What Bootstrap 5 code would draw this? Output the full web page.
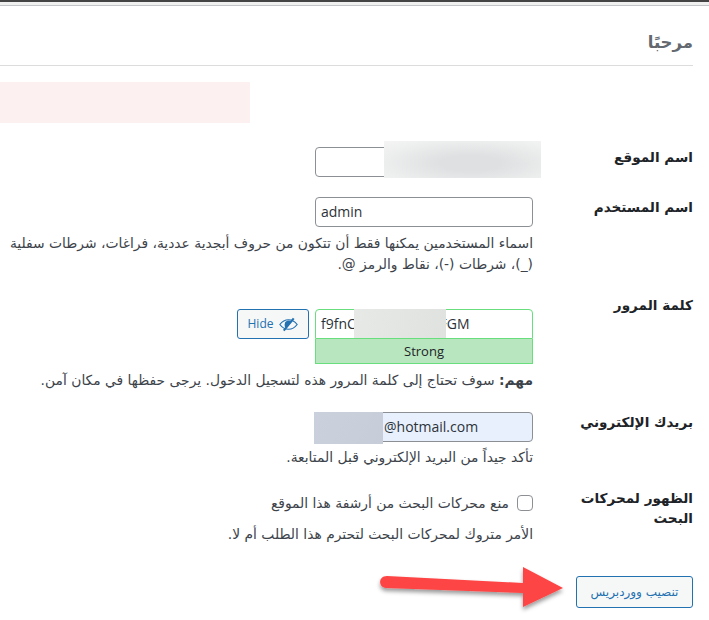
<!DOCTYPE html>
<html lang="ar" dir="rtl">
<head>
<meta charset="utf-8">
<title>مرحبًا</title>
<link href="https://cdn.jsdelivr.net/npm/bootstrap@5.3.0/dist/css/bootstrap.min.css" rel="stylesheet">
<style>
html,body{height:620px;overflow:hidden;background:#fff}
body{font-family:"Open Sans","DejaVu Sans",sans-serif;font-size:14px;color:#3c434a;position:relative}
.top-rule{height:6px;border-top:2px solid #444;border-bottom:1px solid #c3c4c7;background:#f0f0f1}
.wrap{padding:0 16px 0 0}
.page-title{font-family:"DejaVu Sans",sans-serif;font-size:16.5px;font-weight:700;color:#646970;margin:0;height:60px;padding-top:25px;line-height:24px;border-bottom:1px solid #dcdcde}
.notice-box{width:250px;height:41px;background:#fcf0f1;margin:16px auto 0 0}
.form-line{display:flex;align-items:flex-start}
.label-col{width:160px;flex:none;padding-left:40px;font-family:"DejaVu Sans",sans-serif;font-size:13.6px;font-weight:700;color:#1d2327;line-height:20px}
.field-col{width:518px;flex:none}
.field-box{width:218px;height:30px;border:1px solid #8c8f94;border-radius:4px;background:#fff;font-family:"Open Sans",sans-serif;font-size:14px;color:#2c3338;padding:0 5px;line-height:28px;direction:ltr;text-align:left}
.field-good{border-color:#68de7c;border-radius:4px 4px 0 0}
.field-mail{background:#e8f0fe;padding-left:68px}
.strength{width:218px;height:25px;background:#b8e6bf;border:1px solid #68de7c;border-top:0;text-align:center;line-height:24px;color:#1d2327;font-size:13px;direction:ltr}
.hint{font-family:"DejaVu Sans",sans-serif;font-size:13.85px;color:#3c434a;line-height:21px;margin:0}
.hint-wide{width:526px;margin-top:6px}
.hint-gap5{margin-top:5px}
.hint-gap6{margin-top:6px}
.hint-gap11{margin-top:11px}
.line-site{margin-top:24px}
.line-user{margin-top:20px}
.line-pass{margin-top:20px}
.line-mail{margin-top:21px}
.line-robots{margin-top:20px}
.line-go{margin-top:31px}
.field-pad{padding-top:14px}
.robots-row{margin-top:5px}
.robots-text{line-height:20px}
.wp-btn{border:1px solid #2271b1;border-radius:3px;background:#f6f7f7;color:#2271b1;font-size:12px;padding:0}
.btn-hide{width:72px;height:30px;margin-right:6px;display:flex;align-items:center;justify-content:center;gap:6px}
.btn-go{width:117px;height:32px;font-family:"DejaVu Sans",sans-serif;font-size:12px;display:block}
.veil{position:absolute;display:block}
.veil-site{left:384px;top:141px;width:157px;height:37px;background:radial-gradient(ellipse at 55% 60%,#dfe0e1 25%,#eeefef 75%,#f5f5f5)}
.veil-pass{left:354px;top:309px;width:92px;height:29px;background:linear-gradient(100deg,#e6e9e6,#dfe2df)}
.veil-mail{left:314px;top:412px;width:69px;height:32px;background:linear-gradient(120deg,#cbd1dc,#c6cdd9)}
.arrow-mark{position:absolute;left:372px;top:560px;width:200px;height:60px}
.check-mark{appearance:none;width:16px;height:16px;border:1px solid #8c8f94;border-radius:4px;background:#fff;flex:none;margin:0}
</style>
</head>
<body>
<div class="top-rule"></div>
<div class="wrap">
  <h1 class="page-title">مرحبًا</h1>
  <div class="notice-box"></div>

  <div class="form-line line-site">
    <div class="label-col">اسم الموقع</div>
    <div class="field-col"><div class="field-box"></div></div>
  </div>

  <div class="form-line line-user">
    <div class="label-col">اسم المستخدم</div>
    <div class="field-col">
      <div class="field-box">admin</div>
      <p class="hint hint-wide">اسماء المستخدمين يمكنها فقط أن تتكون من حروف أبجدية عددية، فراغات، شرطات سفلية <span class="text-nowrap">(_)،</span> شرطات (-)، نقاط والرمز @.</p>
    </div>
  </div>

  <div class="form-line line-pass">
    <div class="label-col">كلمة المرور</div>
    <div class="field-col field-pad">
      <div class="d-flex align-items-start">
        <div>
          <div class="field-box field-good">f9fnC&nbsp;&nbsp;&nbsp;&nbsp;&nbsp;&nbsp;&nbsp;&nbsp;&nbsp;&nbsp;&nbsp;&nbsp;&nbsp;&nbsp;&nbsp;&nbsp;&nbsp;&nbsp;&nbsp;&nbsp;&nbsp;&nbsp;&nbsp;FGM</div>
          <div class="strength">Strong</div>
        </div>
        <button type="button" class="wp-btn btn-hide">
          <svg width="19" height="15" viewBox="0 0 22 16" fill="none" stroke="#2271b1" aria-hidden="true"><path d="M1 8c3-4 6-5.500 10-5.500S18 4 21 8c-3 4-6 5.500-10 5.500S4 12 1 8z" stroke-width="1.400"/><path d="M6.500 8a4.500 4.500 0 0 1 8-2.800L8 12a4.500 4.500 0 0 1-1.500-4z" fill="#2271b1" stroke="none"/><path d="M5.500 15L17 1" stroke-width="2.400"/></svg>
          <span>Hide</span>
        </button>
      </div>
      <p class="hint hint-gap6"><strong>مهم:</strong> سوف تحتاج إلى كلمة المرور هذه لتسجيل الدخول. يرجى حفظها في مكان آمن.</p>
    </div>
  </div>

  <div class="form-line line-mail">
    <div class="label-col">بريدك الإلكتروني</div>
    <div class="field-col">
      <div class="field-box field-mail">@hotmail.com</div>
      <p class="hint hint-gap5">تأكد جيداً من البريد الإلكتروني قبل المتابعة.</p>
    </div>
  </div>

  <div class="form-line line-robots">
    <div class="label-col">الظهور لمحركات البحث</div>
    <div class="field-col">
      <div class="d-flex align-items-center gap-2 robots-row">
        <input type="checkbox" class="check-mark" aria-label="منع">
        <span class="hint robots-text">منع محركات البحث من أرشفة هذا الموقع</span>
      </div>
      <p class="hint hint-gap11">الأمر متروك لمحركات البحث لتحترم هذا الطلب أم لا.</p>
    </div>
  </div>

  <div class="d-flex line-go">
    <button type="button" class="wp-btn btn-go">تنصيب ووردبريس</button>
  </div>
</div>

<span class="veil veil-site"></span>
<span class="veil veil-pass"></span>
<span class="veil veil-mail"></span>

<svg class="arrow-mark" viewBox="0 0 200 60" aria-hidden="true">
  <defs><filter id="sh" x="-10%" y="-20%" width="120%" height="150%"><feDropShadow dx="0" dy="3" stdDeviation="2" flood-color="#000" flood-opacity=".4"/></filter></defs>
  <path d="M15 16L151 23V7L191 28 151 47V33L14 28C6 27.500 6 16 15 16z" fill="#fe4444" filter="url(#sh)"/>
</svg>
</body>
</html>
